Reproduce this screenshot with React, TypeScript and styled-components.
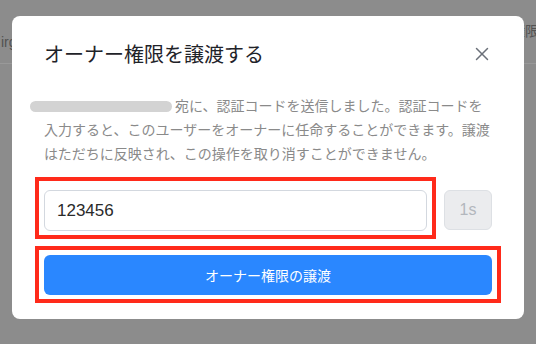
import React from "react";
import styled, { createGlobalStyle } from "styled-components";
import { X } from "lucide-react";

const GlobalStyle = createGlobalStyle`
  html, body {
    margin: 0;
    padding: 0;
    width: 536px;
    height: 344px;
    overflow: hidden;
  }
  body {
    font-family: "Liberation Sans", "Noto Sans CJK JP", sans-serif;
    -webkit-font-smoothing: antialiased;
  }
  * { box-sizing: border-box; }
`;

const Page = styled.div`
  width: 536px;
  height: 344px;
  background: #e9e9e9;
  position: relative;
  overflow: hidden;
`;

const PageHeader = styled.div`
  height: 64px;
  display: flex;
  justify-content: space-between;
  align-items: flex-start;
  border-bottom: 1px solid #ffffff;
`;

const PageCell = styled.span<{ $top: number; $edge: "left" | "right" }>`
  padding-top: ${(p) => p.$top}px;
  font-size: 14px;
  line-height: 20px;
  color: #8a8a8a;
  white-space: nowrap;
  ${(p) => (p.$edge === "left" ? "margin-left: 1px;" : "margin-right: -3px;")}
`;

const Overlay = styled.div`
  position: fixed;
  inset: 0;
  background: rgba(0, 0, 0, 0.4);
  display: flex;
  justify-content: center;
  align-items: flex-start;
  padding-top: 16px;
`;

const Dialog = styled.div`
  width: 512px;
  background: #ffffff;
  border-radius: 8px;
  padding: 24px 32px;
  display: flex;
  flex-direction: column;
`;

const DialogHeader = styled.div`
  display: flex;
  align-items: center;
  justify-content: space-between;
  height: 28px;
`;

const Title = styled.h2`
  margin: 0;
  font-family: "Noto Sans CJK JP", sans-serif;
  font-size: 20px;
  line-height: 28px;
  font-weight: 400;
  color: #1f2329;
`;

const CloseButton = styled.button`
  border: none;
  background: none;
  padding: 0;
  margin-right: -2px;
  width: 24px;
  height: 24px;
  display: flex;
  align-items: center;
  justify-content: center;
  color: #6b7079;
  cursor: pointer;
`;

const Description = styled.p`
  margin: 25px 0 0;
  width: 448px;
  font-family: "Noto Sans CJK JP", sans-serif;
  font-size: 14px;
  line-height: 24px;
  color: #8a8a8a;
`;

const Redacted = styled.span`
  display: inline-block;
  width: 142px;
  height: 11px;
  margin-left: -14px;
  margin-right: 3px;
  border-radius: 6px;
  background: #d3d3d3;
  vertical-align: -1px;
  filter: blur(0.5px);
`;

const CodeRow = styled.div`
  margin-top: 25px;
  display: flex;
  align-items: flex-start;
  gap: 17px;
`;

const Annotated = styled.div<{ $grow?: boolean }>`
  position: relative;
  display: flex;
  ${(p) => (p.$grow ? "flex: 1;" : "")}
`;

const Highlight = styled.div<{ $top: number; $bottom: number }>`
  position: absolute;
  top: -${(p) => p.$top}px;
  bottom: -${(p) => p.$bottom}px;
  left: -9px;
  right: -9px;
  border: 4px solid #ff2a1a;
  pointer-events: none;
`;

const CodeInput = styled.input`
  width: 100%;
  height: 41px;
  border: 1px solid #d3d8df;
  border-radius: 6px;
  padding: 0 12px;
  font-family: "Liberation Sans", sans-serif;
  font-size: 17px;
  color: #2a2a2a;
  outline: none;
  background: #ffffff;
`;

const ResendButton = styled.button`
  width: 48px;
  height: 40px;
  border: 1px solid #dde0e4;
  border-radius: 6px;
  background: #ebecee;
  color: #b3b7bd;
  font-family: "Liberation Sans", sans-serif;
  font-size: 16px;
  padding: 0;
`;

const PrimaryButton = styled.button`
  width: 100%;
  height: 40px;
  border: none;
  border-radius: 6px;
  background: #2a87ff;
  color: #ffffff;
  font-family: "Noto Sans CJK JP", sans-serif;
  font-size: 14px;
  padding: 0;
  cursor: pointer;
`;

const SubmitWrap = styled(Annotated)`
  margin-top: 24px;
`;

export default function App() {
  return (
    <>
      <GlobalStyle />
      <Page>
        <PageHeader>
          <PageCell $top={32} $edge="left">irg</PageCell>
          <PageCell $top={21} $edge="right">権限</PageCell>
        </PageHeader>
      </Page>
      <Overlay>
        <Dialog role="dialog">
          <DialogHeader>
            <Title>オーナー権限を譲渡する</Title>
            <CloseButton aria-label="close">
              <X size={22} strokeWidth={1.6} />
            </CloseButton>
          </DialogHeader>
          <Description>
            <Redacted />
            宛に、認証コードを送信しました。認証コードを
            <br />
            入力すると、このユーザーをオーナーに任命することができます。譲渡
            <br />
            はただちに反映され、この操作を取り消すことができません。
          </Description>
          <CodeRow>
            <Annotated $grow>
              <CodeInput defaultValue="123456" />
              <Highlight $top={13} $bottom={8} />
            </Annotated>
            <ResendButton disabled>1s</ResendButton>
          </CodeRow>
          <SubmitWrap>
            <PrimaryButton>オーナー権限の譲渡</PrimaryButton>
            <Highlight $top={9} $bottom={8} />
          </SubmitWrap>
        </Dialog>
      </Overlay>
    </>
  );
}
